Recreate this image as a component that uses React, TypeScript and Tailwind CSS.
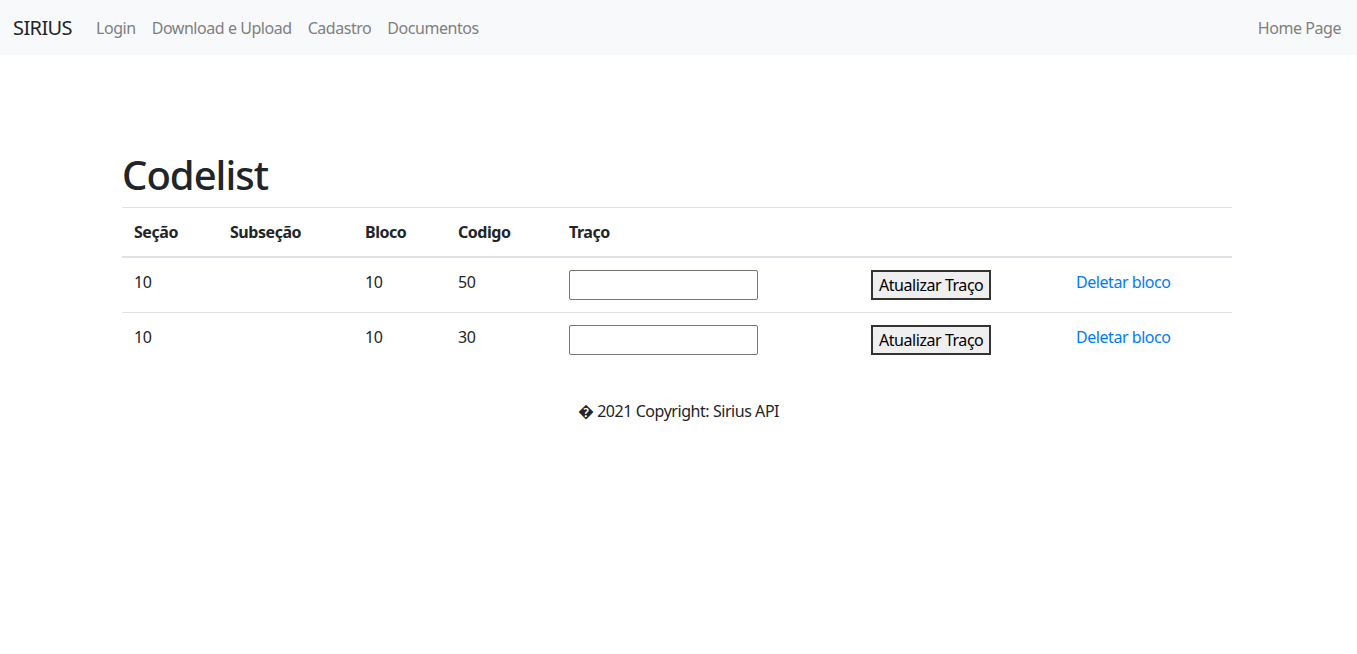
const rows = [
  { secao: "10", subsecao: "", bloco: "10", codigo: "50" },
  { secao: "10", subsecao: "", bloco: "10", codigo: "30" },
];

const App = () => {
  return (
    <div className="min-h-screen bg-white text-[#212529] text-base tracking-[-0.45px]" style={{ fontFamily: '"Noto Sans", "Open Sans", sans-serif' }}>
      {/* navbar */}
      <nav className="flex items-center h-[55px] pl-[13px] pr-4 bg-[#f8f9fa]">
        <a className="text-xl text-[#212529] mr-4 tracking-[-0.6px]">SIRIUS</a>
        <div className="flex items-center">
          <a className="px-2 text-[#808080]">Login</a>
          <a className="px-2 text-[#808080]">Download e Upload</a>
          <a className="px-2 text-[#808080]">Cadastro</a>
          <a className="px-2 text-[#808080]">Documentos</a>
        </div>
        <a className="ml-auto text-[#808080]">Home Page</a>
      </nav>

      <main className="w-[1110px] ml-[122px] pt-[96px]">
        <h1 className="text-[40px] leading-[48px] font-medium mb-2 tracking-[-1px]">Codelist</h1>
        <table className="w-full border-collapse text-left">
          <thead>
            <tr className="border-t border-[#dee2e6] border-b-2">
              <th className="w-[96px] p-3 font-bold">Seção</th>
              <th className="w-[135px] p-3 font-bold">Subseção</th>
              <th className="w-[93px] p-3 font-bold">Bloco</th>
              <th className="w-[111px] p-3 font-bold">Codigo</th>
              <th className="w-[302px] p-3 font-bold">Traço</th>
              <th className="w-[205px] p-3"></th>
              <th className="p-3"></th>
            </tr>
          </thead>
          <tbody>
            {rows.map((r, i) => (
              <tr key={i} className="border-t border-[#dee2e6] align-top">
                <td className="p-3 leading-6">{r.secao}</td>
                <td className="p-3 leading-6">{r.subsecao}</td>
                <td className="p-3 leading-6">{r.bloco}</td>
                <td className="p-3 leading-6">{r.codigo}</td>
                <td className="p-3">
                  <input type="text" className="block w-[189px] h-[30px] border border-[#767676] rounded-[2px] bg-white" />
                </td>
                <td className="p-3">
                  <button className="h-[30px] px-[6px] bg-[#efefef] border-2 border-[#333] text-base leading-none text-black">Atualizar Traço</button>
                </td>
                <td className="p-3 leading-6">
                  <a className="text-[#007bff]">Deletar bloco</a>
                </td>
              </tr>
            ))}
          </tbody>
        </table>
      </main>

      <footer className="text-center pt-8 leading-6">� 2021 Copyright: Sirius API</footer>
    </div>
  );
};

export default App;
